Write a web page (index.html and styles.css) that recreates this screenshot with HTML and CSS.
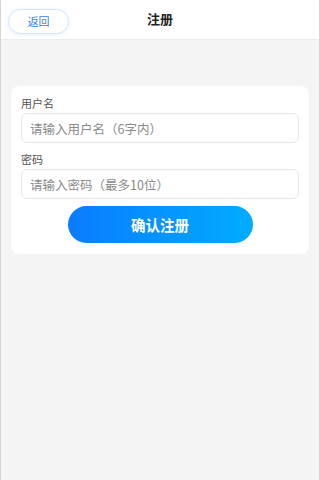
FILE: index.html
```html
<!DOCTYPE html>
<html lang="zh-CN">
<head>
  <meta charset="UTF-8" />
  <title>注册</title>
  <link rel="stylesheet" href="styles.css">
</head>
<body>
  <div class="page">
    <!-- Top bar -->
    <div class="topbar">
      <div class="topbar-left">
        <button class="back-btn">返回</button>
      </div>
      <div class="title">注册</div>
      <div></div>
    </div>

    <!-- Register form -->
    <div class="main">
      <div class="card">
        <label class="field-label">用户名</label>
        <input class="field-input" type="text" placeholder="请输入用户名（6字内）" />
        <label class="field-label second">密码</label>
        <input class="field-input" type="password" placeholder="请输入密码（最多10位）" />
        <div class="actions">
          <button class="submit-btn">确认注册</button>
        </div>
      </div>
    </div>
  </div>
</body>
</html>
```

FILE: styles.css
```css
html, body {
  margin: 0;
  padding: 0;
}

body {
  font-family: "Noto Sans CJK SC", "Noto Sans", sans-serif;
  background: #f4f4f4;
  color: #333;
}

.page {
  box-sizing: border-box;
  min-height: 480px;
  border-left: 1px solid #d4d4d4;
  border-right: 1px solid #d4d4d4;
  background: #f4f4f4;
}

.topbar {
  display: grid;
  grid-template-columns: 1fr auto 1fr;
  align-items: center;
  height: 39px;
  background: #fff;
  border-bottom: 1px solid #ebebeb;
}

.topbar-left {
  padding-left: 7px;
}

.back-btn {
  display: block;
  width: 61px;
  height: 25px;
  margin-top: 4px;
  padding: 0;
  font-family: inherit;
  font-size: 11px;
  line-height: 23px;
  color: #3a7df2;
  background: #fff;
  border: 1px solid #d5e5ff;
  border-radius: 13px;
  box-shadow: 0 1px 4px rgba(58, 125, 242, 0.12);
  cursor: pointer;
}

.title {
  font-size: 13px;
  font-weight: bold;
  color: #222;
  margin-top: -2px;
}

.main {
  padding: 46px 10px 0;
}

.card {
  display: flex;
  flex-direction: column;
  background: #fff;
  border-radius: 8px;
  padding: 10px 10px 11px;
}

.field-label {
  font-size: 11px;
  line-height: 15px;
  color: #555;
  margin-bottom: 2px;
}

.field-label.second {
  margin-top: 9px;
}

.field-input {
  box-sizing: border-box;
  height: 30px;
  width: 100%;
  padding: 0 8px;
  font-family: inherit;
  font-size: 12.5px;
  color: #333;
  border: 1px solid #e6e6e6;
  border-radius: 6px;
  outline: none;
}

.field-input::placeholder {
  color: #8a8a8a;
}

.actions {
  display: flex;
  justify-content: center;
  margin-top: 7px;
}

.submit-btn {
  width: 185px;
  height: 37px;
  padding: 0;
  font-family: inherit;
  font-size: 14.5px;
  font-weight: bold;
  color: #fff;
  background: linear-gradient(to right, #0a7cff, #00acff);
  border: none;
  border-radius: 19px;
  cursor: pointer;
}
```
